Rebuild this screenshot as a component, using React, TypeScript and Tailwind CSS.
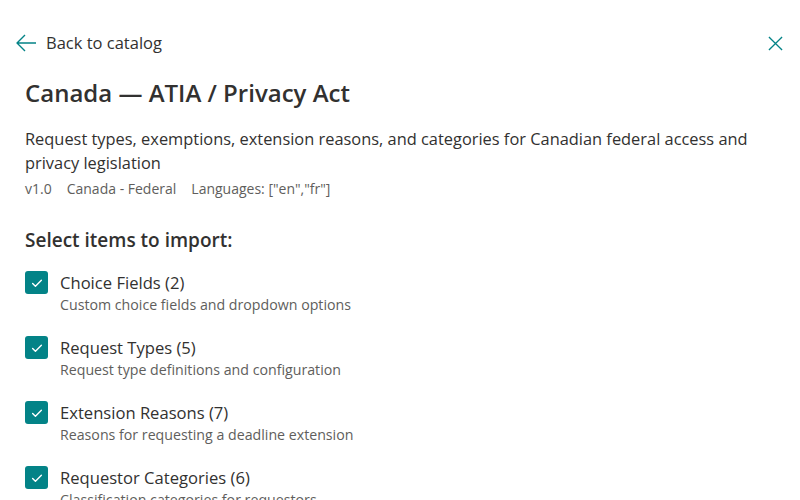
import React from "react";

const items = [
  { title: "Choice Fields (2)", desc: "Custom choice fields and dropdown options" },
  { title: "Request Types (5)", desc: "Request type definitions and configuration" },
  { title: "Extension Reasons (7)", desc: "Reasons for requesting a deadline extension" },
  { title: "Requestor Categories (6)", desc: "Classification categories for requestors" },
];

function Check() {
  return (
    <div className="w-[23px] h-[23px] mt-[0px] shrink-0 rounded-[3px] bg-[#038387] flex items-center justify-center">
      <svg width="14" height="14" viewBox="0 0 16 16" fill="none">
        <path d="M3 8.5l3.2 3.2L13 4.8" stroke="white" strokeWidth="1.6" strokeLinecap="round" strokeLinejoin="round" />
      </svg>
    </div>
  );
}

export default function App() {
  return (
    <div className="w-[800px] h-[500px] overflow-hidden bg-white text-[#323130]" style={{ fontFamily: '"Open Sans", "Noto Sans", sans-serif' }}>
      <div className="flex items-center justify-between pl-[15px] pr-[17px] pt-[30px]">
        <div className="flex items-center gap-[9px]">
          <svg width="22" height="22" viewBox="0 0 22 22" fill="none">
            <path d="M21 11H2M10 3l-8 8 8 8" stroke="#038387" strokeWidth="1.4" strokeLinejoin="round" />
          </svg>
          <span className="text-[16.5px] leading-[26px]">Back to catalog</span>
        </div>
        <svg width="15" height="15" viewBox="0 0 16 16" fill="none">
          <path d="M1 1l14 14M15 1L1 15" stroke="#038387" strokeWidth="1.4" />
        </svg>
      </div>
      <div className="px-[25px]">
        <h1 className="mt-[20px] text-[24px] leading-[34px] font-semibold">Canada — ATIA / Privacy Act</h1>
        <p className="mt-[17px] text-[16.4px] leading-[24px] text-[#323130]">
          Request types, exemptions, extension reasons, and categories for Canadian federal access and privacy legislation
        </p>
        <div className="mt-[4px] flex gap-[15px] text-[14px] leading-[20px] text-[#605e5c]">
          <span>v1.0</span>
          <span>Canada - Federal</span>
          <span>Languages: ["en","fr"]</span>
        </div>
        <h2 className="mt-[28px] text-[19px] leading-[26px] font-semibold">Select items to import:</h2>
        <div className="mt-[18px] flex flex-col gap-[21px]">
          {items.map((it) => (
            <div key={it.title} className="flex gap-[12px]">
              <Check />
              <div className="flex flex-col">
                <span className="text-[16.6px] leading-[24px]">{it.title}</span>
                <span className="text-[14.2px] leading-[20px] text-[#605e5c]">{it.desc}</span>
              </div>
            </div>
          ))}
        </div>
      </div>
    </div>
  );
}
